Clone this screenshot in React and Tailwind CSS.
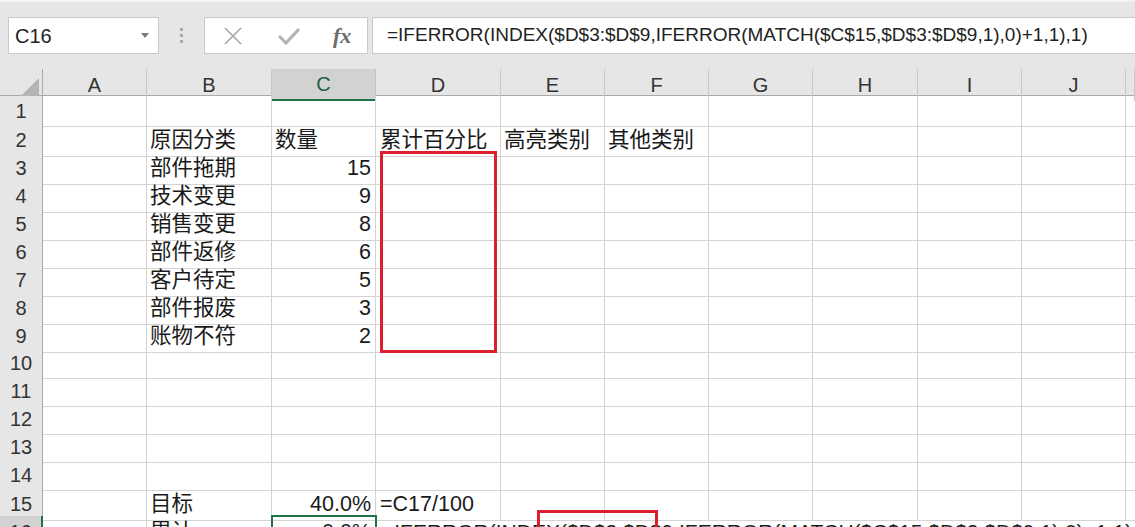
import React from 'react';

const COLS = 'grid grid-cols-[43px_104px_125px_104px_125px_104px_104px_104px_105px_104px_104px_1fr]';
const LETTERS = ['A', 'B', 'C', 'D', 'E', 'F', 'G', 'H', 'I', 'J', ''];
const FORMULA = '=IFERROR(INDEX($D$3:$D$9,IFERROR(MATCH($C$15,$D$3:$D$9,1),0)+1,1),1)';

const DATA = {
  2: { B: '原因分类', C: '数量', D: '累计百分比', E: '高亮类别', F: '其他类别' },
  3: { B: '部件拖期', C: 15 },
  4: { B: '技术变更', C: 9 },
  5: { B: '销售变更', C: 8 },
  6: { B: '部件返修', C: 6 },
  7: { B: '客户待定', C: 5 },
  8: { B: '部件报废', C: 3 },
  9: { B: '账物不符', C: 2 },
  15: { B: '目标', C: '40.0%', D: '=C17/100' },
  16: { B: '累计', C: '0.0%' },
};

function Toolbar() {
  return (
    <div className="h-[69px] bg-[#e6e6e6] border-t-2 border-[#f3f3f3] flex items-start pt-[15px]">
      {/* name box */}
      <div className="ml-[8px] w-[151px] h-[37px] bg-white border border-[#c9c9c9] flex items-center justify-between pl-[6px] pr-[9px]">
        <span className="text-[20px] text-[#222]">C16</span>
        <svg width="8" height="5" viewBox="0 0 8 5"><path d="M0 0h8L4 5z" fill="#7a7a7a" /></svg>
      </div>
      <div className="w-[45px] h-[37px] flex flex-col items-center justify-center gap-[3px]">
        <span className="w-[3px] h-[3px] bg-[#a8a8a8]" />
        <span className="w-[3px] h-[3px] bg-[#a8a8a8]" />
        <span className="w-[3px] h-[3px] bg-[#a8a8a8]" />
      </div>
      {/* cancel / enter / fx */}
      <div className="w-[164px] h-[37px] bg-white border border-[#c9c9c9] flex items-center">
        <svg className="ml-[18px]" width="20" height="20" viewBox="0 0 20 20">
          <path d="M2 2L18 18M18 2L2 18" stroke="#a6a6a6" strokeWidth="1.6" fill="none" />
        </svg>
        <svg className="ml-[35px]" width="22" height="18" viewBox="0 0 22 18">
          <path d="M1 9L8 16L21 2" stroke="#b3b3b3" strokeWidth="3" fill="none" />
        </svg>
        <span className="ml-[33px] text-[22px] italic font-bold text-[#6a6a6a] font-['Liberation_Serif',serif] leading-none">fx</span>
      </div>
      <div className="ml-[4px] flex-1 h-[37px] bg-white border border-r-0 border-[#c9c9c9] flex items-center pl-[14px]">
        <span className="text-[19px] text-[#222] whitespace-nowrap">{FORMULA}</span>
      </div>
    </div>
  );
}

function HeaderRow() {
  return (
    <div className={`${COLS} h-[27px] bg-[#e6e6e6] border-b border-[#a9a9a9]`}>
      <div className="border-r border-[#a9a9a9] flex items-end justify-end pr-[3px] pb-[3px]">
        <svg width="20" height="20" viewBox="0 0 20 20"><path d="M0 20H20V0z" fill="#b5b5b5" /></svg>
      </div>
      {LETTERS.map((l, i) => (
        <div
          key={i}
          className={
            l === 'C'
              ? 'bg-[#d2d2d2] border-r border-[#c4c4c4] border-b-2 border-b-[#217346] flex items-center justify-center text-[20px] text-[#215e3e]'
              : 'border-r border-[#c8c8c8] flex items-center justify-center text-[20px] text-[#333]'
          }
        >
          {l}
        </div>
      ))}
    </div>
  );
}

function Row({ n }) {
  const d = DATA[n] || {};
  const selected = n === 16;
  return (
    <div className={`${COLS} h-[28px]`}>
      <div
        className={
          selected
            ? 'bg-[#d2d2d2] border-r-2 border-[#217346] border-b border-b-[#bdbdbd] flex items-center justify-center text-[20px] text-[#333]'
            : 'bg-[#e6e6e6] border-r border-[#a9a9a9] border-b border-b-[#c8c8c8] flex items-center justify-center text-[20px] text-[#333]'
        }
      >
        {n}
      </div>
      <div className="border-r border-b border-[#d4d4d4]" />
      <div className="border-r border-b border-[#d4d4d4] flex items-center pl-[3px] text-[21.5px] text-[#1a1a1a] whitespace-nowrap">
        {d.B}
      </div>
      <div
        className={`border-r border-b border-[#d4d4d4] flex items-center text-[21.5px] text-[#1a1a1a] whitespace-nowrap ${
          typeof d.C === 'string' && n === 2 ? 'pl-[3px]' : 'justify-end pr-[4px]'
        }`}
      >
        {d.C}
      </div>
      {selected ? (
        <div className="col-span-8 border-b border-[#d4d4d4] flex items-center pl-[6px] text-[21px] text-[#1a1a1a] whitespace-nowrap overflow-visible">
          {FORMULA}
        </div>
      ) : (
        <>
          <div className="border-r border-b border-[#d4d4d4] flex items-center pl-[4px] text-[21.5px] text-[#1a1a1a] whitespace-nowrap">
            {d.D}
          </div>
          <div className="border-r border-b border-[#d4d4d4] flex items-center pl-[3px] text-[21.5px] text-[#1a1a1a] whitespace-nowrap">
            {d.E}
          </div>
          <div className="border-r border-b border-[#d4d4d4] flex items-center pl-[3px] text-[21.5px] text-[#1a1a1a] whitespace-nowrap">
            {d.F}
          </div>
          <div className="border-r border-b border-[#d4d4d4]" />
          <div className="border-r border-b border-[#d4d4d4]" />
          <div className="border-r border-b border-[#d4d4d4]" />
          <div className="border-r border-b border-[#d4d4d4]" />
          <div className="border-b border-[#d4d4d4]" />
        </>
      )}
    </div>
  );
}

export default function App() {
  const rows = Array.from({ length: 16 }, (_, i) => i + 1);
  return (
    <div className="relative w-[1135px] h-[527px] overflow-hidden bg-white font-['Liberation_Sans','Noto_Sans_CJK_SC',sans-serif]">
      <Toolbar />
      <HeaderRow />
      {rows.map((n) => <Row key={n} n={n} />)}

      {/* selection C16 */}
      <div className="absolute left-[271px] top-[515px] w-[106px] h-[30px] border-2 border-[#217346]" />
      {/* red highlight boxes */}
      <div className="absolute left-[380px] top-[151px] w-[117px] h-[202px] border-[3px] border-[#db1f2e]" />
      <div className="absolute left-[537px] top-[510px] w-[121px] h-[40px] border-[3px] border-[#db1f2e]" />
    </div>
  );
}
